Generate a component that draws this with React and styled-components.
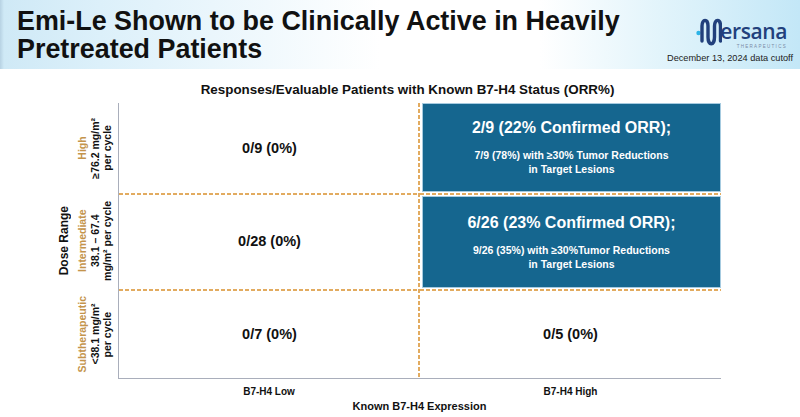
import React from "react";
import styled, { createGlobalStyle, css } from "styled-components";

const Global = createGlobalStyle`
  html, body { margin: 0; padding: 0; background: #fff; }
  body { font-family: "Liberation Sans", Arial, sans-serif; color: #111; }
`;

const Page = styled.div`
  width: 800px;
  height: 417px;
  overflow: hidden;
  background: #fff;
`;

const Header = styled.header`
  height: 69px;
  display: flex;
  justify-content: space-between;
  background: linear-gradient(
    90deg,
    #b7d2e3 0px,
    #cfe9f6 4px,
    #dcf0fa 100px,
    #ffffff 380px,
    #ffffff 540px,
    #e2f4fb 660px,
    #c3e7f7 800px
  );
`;

const Title = styled.h1`
  margin: 0;
  padding: 8px 0 0 17px;
  font-size: 26.9px;
  line-height: 27.5px;
  font-weight: 700;
  color: #111;
`;

const Brand = styled.div`
  display: flex;
  flex-direction: column;
  align-items: flex-end;
  padding: 16px 7px 0 0;
`;

const Logo = styled.div`
  display: flex;
  align-items: flex-start;
  margin-right: 6px;
`;

const LogoWord = styled.div`
  display: flex;
  flex-direction: column;
  align-items: flex-end;
  margin-left: -2px;
  padding-top: 4px;
`;

const LogoText = styled.span`
  font-family: "Open Sans", "DejaVu Sans", sans-serif;
  font-size: 21px;
  line-height: 23px;
  font-weight: 600;
  color: #22407c;
  letter-spacing: -0.4px;
`;

const LogoSub = styled.span`
  font-family: "Liberation Sans", Arial, sans-serif;
  font-size: 4.5px;
  letter-spacing: 1.3px;
  color: #7a8aa6;
  margin-top: 1px;
  line-height: 5px;
`;

const DateNote = styled.div`
  margin-top: 4px;
  font-size: 9.2px;
  color: #222;
  white-space: nowrap;
`;

const Chart = styled.section`
  padding-left: 55px;
`;

const ChartTitle = styled.h2`
  margin: 13px 0 5px 0;
  padding-right: 40px;
  text-align: center;
  font-size: 13.4px;
  line-height: 16px;
  font-weight: 700;
  color: #111;
`;

const Grid = styled.div`
  display: grid;
  grid-template-columns: 20px 43px 302px 301px;
  grid-template-rows: 90px 96px 90px 18px 17px;
`;

const Vertical = styled.div`
  writing-mode: vertical-rl;
  transform: rotate(180deg);
  text-align: center;
  font-weight: 700;
`;

const DoseCell = styled.div`
  grid-column: 1;
  grid-row: 1 / 4;
  display: flex;
  align-items: center;
  justify-content: center;
  font-size: 12px;
  padding-right: 2px;
`;

const RowLabelCell = styled.div`
  grid-column: 2;
  grid-row: ${(p) => p.$row};
  display: flex;
  align-items: center;
  justify-content: center;
  padding-right: 4px;
  font-size: 10.5px;
  line-height: 12.5px;
`;

const Tier = styled.div`
  color: #c4944c;
  font-weight: 700;
`;

const Line = styled.div``;

const DASH = "#e2ab60";
const AXIS = "1px solid #a9aebb";

const dashes = (top, right) => {
  const imgs = [];
  const sizes = [];
  const reps = [];
  const pos = [];
  if (top) {
    imgs.push(`linear-gradient(90deg, ${DASH} 4px, transparent 4px)`);
    sizes.push("6px 2px");
    reps.push("repeat-x");
    pos.push("left top");
  }
  if (right) {
    imgs.push(`linear-gradient(180deg, ${DASH} 4px, transparent 4px)`);
    sizes.push("2px 6px");
    reps.push("repeat-y");
    pos.push("right top");
  }
  if (!imgs.length) return "";
  return css`
    background-image: ${imgs.join(", ")};
    background-size: ${sizes.join(", ")};
    background-repeat: ${reps.join(", ")};
    background-position: ${pos.join(", ")};
  `;
};

const Cell = styled.div`
  grid-column: ${(p) => p.$col};
  grid-row: ${(p) => p.$row};
  box-sizing: border-box;
  display: flex;
  align-items: center;
  justify-content: center;
  border-left: ${(p) => (p.$col === 3 ? AXIS : "none")};
  border-bottom: ${(p) => (p.$row === 3 ? AXIS : "none")};
  padding: ${(p) => p.$pad || "0"};
  ${(p) => dashes(p.$row > 1, p.$col === 3)}
`;

const Value = styled.div`
  font-size: 14.5px;
  font-weight: 700;
  color: #111;
`;

const BlueBox = styled.div`
  box-sizing: border-box;
  width: 100%;
  height: 100%;
  background: #15668f;
  border: 1px solid #a6cbe0;
  color: #fff;
  display: flex;
  flex-direction: column;
  align-items: center;
  justify-content: center;
  text-align: center;
  font-weight: 700;
`;

const BoxHead = styled.div`
  font-size: 16px;
  line-height: 18px;
  margin-bottom: 11px;
`;

const BoxSub = styled.div`
  font-size: 10.5px;
  line-height: 14px;
`;

const AxisLabel = styled.div`
  grid-column: ${(p) => p.$col};
  grid-row: 4;
  text-align: center;
  font-size: 10px;
  font-weight: 700;
  padding-top: 7px;
`;

const AxisTitle = styled.div`
  grid-column: 3 / 5;
  grid-row: 5;
  text-align: center;
  font-size: 11px;
  font-weight: 700;
  padding-top: 3px;
`;

function MersanaM() {
  return (
    <svg width="26" height="30" viewBox="0 0 26 30">
      <circle cx="2.5" cy="17" r="2.2" fill="#2bb3e6" />
      <path
        d="M6 25 L6 10 C6 2.5 12 2.5 12 10 L12 21 C12 30 18.5 30 18.5 21 L18.5 10 C18.5 2.5 24.5 2.5 24.5 10 L24.5 25"
        fill="none"
        stroke="#22407c"
        strokeWidth="3.4"
        strokeLinecap="round"
        strokeLinejoin="round"
      />
    </svg>
  );
}

const rows = [
  {
    tier: "High",
    lines: ["≥76.2 mg/m²", "per cycle"],
    low: "0/9 (0%)",
    high: {
      head: "2/9 (22% Confirmed ORR);",
      sub: ["7/9 (78%) with ≥30% Tumor Reductions", "in Target Lesions"],
    },
  },
  {
    tier: "Intermediate",
    lines: ["38.1 – 67.4", "mg/m² per cycle"],
    low: "0/28 (0%)",
    high: {
      head: "6/26 (23% Confirmed ORR);",
      sub: ["9/26 (35%) with ≥30%Tumor Reductions", "in Target Lesions"],
    },
  },
  {
    tier: "Subtherapeutic",
    lines: ["<38.1 mg/m²", "per cycle"],
    low: "0/7 (0%)",
    highValue: "0/5 (0%)",
  },
];

export default function App() {
  return (
    <Page>
      <Global />
      <Header>
        <Title>
          Emi-Le Shown to be Clinically Active in Heavily
          <br />
          Pretreated Patients
        </Title>
        <Brand>
          <Logo>
            <MersanaM />
            <LogoWord>
              <LogoText>ersana</LogoText>
              <LogoSub>THERAPEUTICS</LogoSub>
            </LogoWord>
          </Logo>
          <DateNote>December 13, 2024 data cutoff</DateNote>
        </Brand>
      </Header>
      <Chart>
        <ChartTitle>
          Responses/Evaluable Patients with Known B7-H4 Status (ORR%)
        </ChartTitle>
        <Grid>
          <DoseCell>
            <Vertical>Dose Range</Vertical>
          </DoseCell>
          {rows.map((r, i) => (
            <React.Fragment key={r.tier}>
              <RowLabelCell $row={i + 1}>
                <Vertical>
                  <Tier>{r.tier}</Tier>
                  {r.lines.map((l) => (
                    <Line key={l}>{l}</Line>
                  ))}
                </Vertical>
              </RowLabelCell>
              <Cell $col={3} $row={i + 1}>
                <Value>{r.low}</Value>
              </Cell>
              <Cell
                $col={4}
                $row={i + 1}
                $pad={r.high ? (i === 0 ? "0 0 1px 2px" : "3px 0 1px 2px") : "0"}
              >
                {r.high ? (
                  <BlueBox>
                    <BoxHead>{r.high.head}</BoxHead>
                    {r.high.sub.map((s) => (
                      <BoxSub key={s}>{s}</BoxSub>
                    ))}
                  </BlueBox>
                ) : (
                  <Value>{r.highValue}</Value>
                )}
              </Cell>
            </React.Fragment>
          ))}
          <AxisLabel $col={3}>B7-H4 Low</AxisLabel>
          <AxisLabel $col={4}>B7-H4 High</AxisLabel>
          <AxisTitle>Known B7-H4 Expression</AxisTitle>
        </Grid>
      </Chart>
    </Page>
  );
}
